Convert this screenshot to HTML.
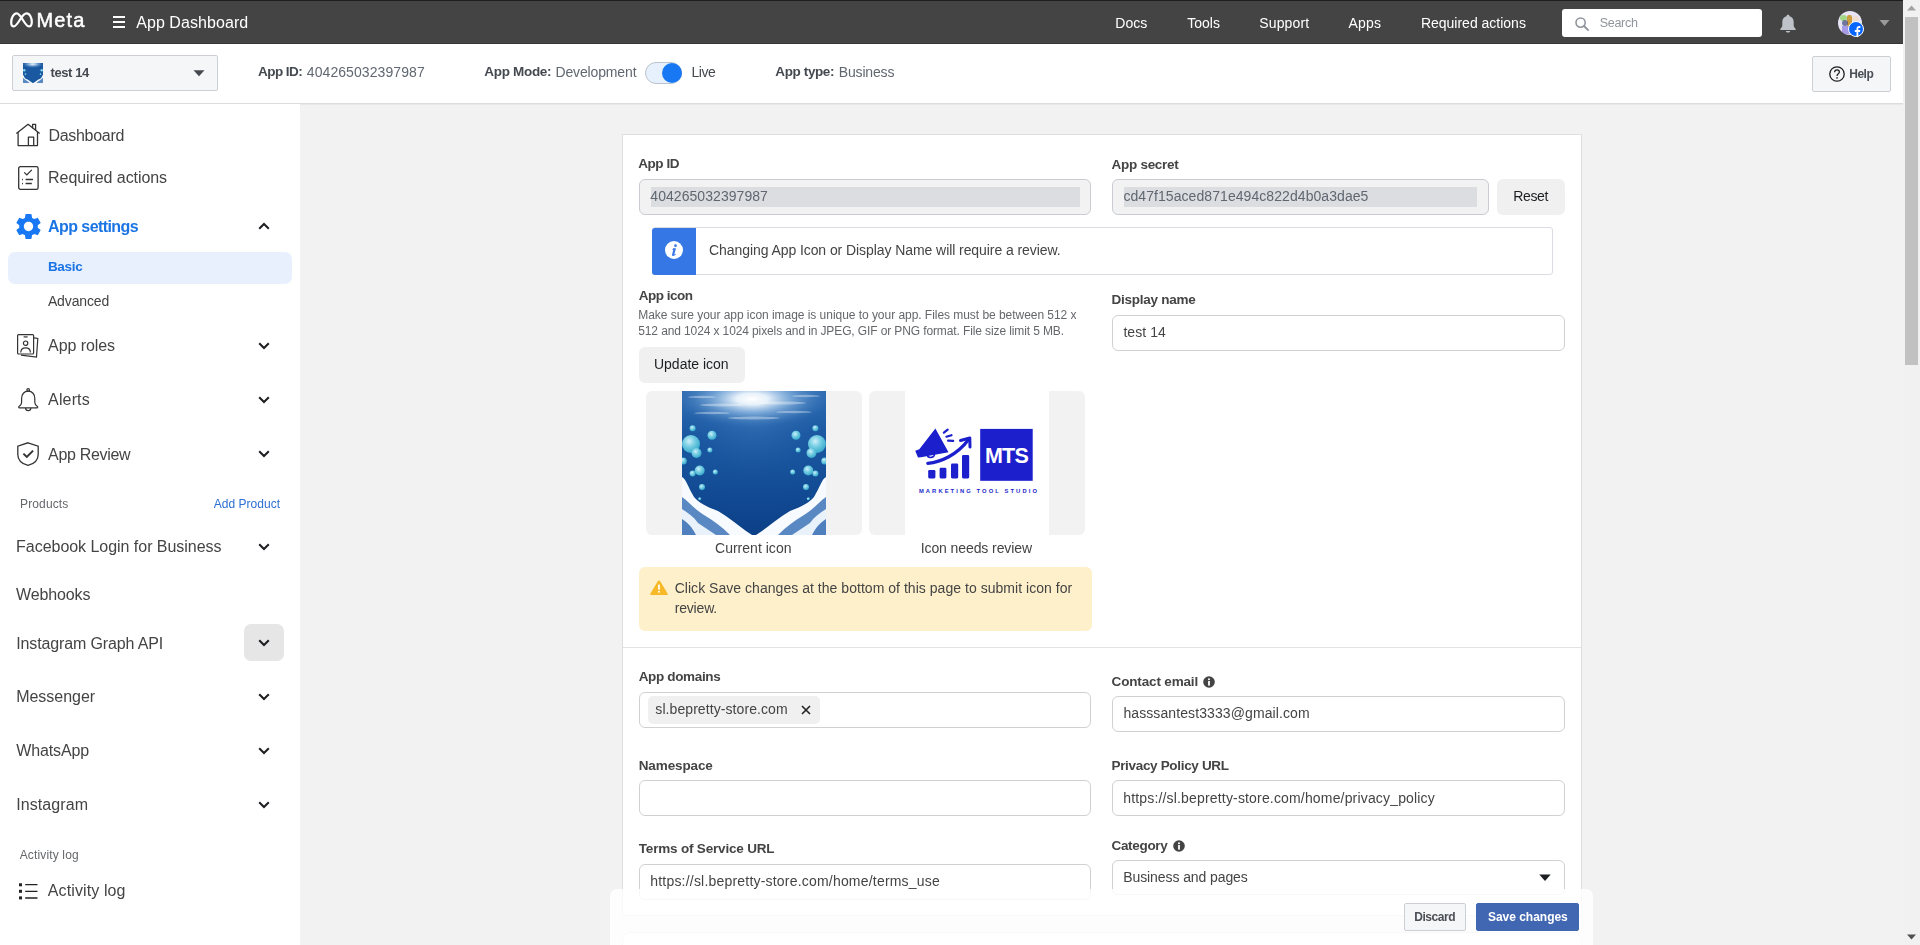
<!DOCTYPE html>
<html><head><meta charset="utf-8"><title>App Dashboard</title>
<style>
html,body{margin:0;padding:0;width:1920px;height:945px;overflow:hidden;background:#f2f2f2;font-family:"Liberation Sans",sans-serif;}
.a{position:absolute;box-sizing:border-box;}
.t{position:absolute;white-space:pre;font-family:"Liberation Sans",sans-serif;}
.L{position:absolute;left:0;top:0;width:1920px;height:945px;will-change:transform;}
svg{position:absolute;overflow:visible;}
.inp{position:absolute;box-sizing:border-box;background:#fff;border:1px solid #d0d1d4;border-radius:6px;}
</style></head><body>
<!-- topbar -->
<div class="a" style="left:0;top:0;width:1903px;height:44px;background:#444;border-top:1px solid #1e1e1e;border-bottom:1px solid #353535;"></div>
<!-- meta infinity -->
<svg style="left:10px;top:12px" width="23" height="16" viewBox="0 0 23 16"><path d="M6.8 1.3C3.6 1.3 1.2 6 1.2 10.2c0 2.5 1 4.2 2.6 4.2 2 0 3.4-2.1 6.6-7.4C13.4 2.2 14.6 1.3 16.6 1.3c3 0 5.2 4.4 5.2 8.6 0 2.7-1.1 4.5-2.9 4.5-2 0-3.3-1.9-6.3-6.9C9.6 2.5 8.6 1.3 6.8 1.3z" fill="none" stroke="#fff" stroke-width="2.2" stroke-linejoin="round"/></svg>
<!-- hamburger -->
<div class="a" style="left:113px;top:16px;width:12px;height:2px;background:#fff"></div>
<div class="a" style="left:113px;top:21px;width:12px;height:2px;background:#fff"></div>
<div class="a" style="left:113px;top:26px;width:12px;height:2px;background:#fff"></div>
<!-- search -->
<div class="a" style="left:1562px;top:9px;width:200px;height:28px;background:#fff;border-radius:3px"></div>
<svg style="left:1575px;top:17px" width="14" height="14" viewBox="0 0 14 14"><circle cx="5.6" cy="5.6" r="4.6" fill="none" stroke="#90949c" stroke-width="1.6"/><path d="M9 9l4 4" stroke="#90949c" stroke-width="1.8" stroke-linecap="round"/></svg>
<!-- bell -->
<svg style="left:1779px;top:14px" width="18" height="19" viewBox="0 0 18 19"><path d="M9 0.8c0.9 0 1.5 0.6 1.5 1.4 2.7 0.6 4.2 2.8 4.2 5.6v3.8c0 1.2 0.6 2 1.6 2.8 0.6 0.5 0.6 1.6-0.3 1.6H2c-0.9 0-0.9-1.1-0.3-1.6 1-0.8 1.6-1.6 1.6-2.8V7.8c0-2.8 1.5-5 4.2-5.6C7.5 1.4 8.1 0.8 9 0.8z M6.8 17h4.4c-0.3 1-1.1 1.6-2.2 1.6S7.1 18 6.8 17z" fill="#bec3c9"/></svg>
<!-- avatar -->
<div class="a" style="left:1838px;top:11px;width:24px;height:24px;border-radius:50%;background:#e9e4f5;overflow:hidden">
<div class="a" style="left:2px;top:4px;width:7px;height:6px;border-radius:50%;background:#8fd36a;opacity:.8"></div>
<div class="a" style="left:9px;top:4px;width:5px;height:12px;border-radius:2px;background:#c9962a;opacity:.9"></div>
<div class="a" style="left:4px;top:9px;width:6px;height:6px;border-radius:50%;background:#3c4a7a;opacity:.7"></div>
<div class="a" style="left:4px;top:15px;width:9px;height:8px;background:#8a7ae0;opacity:.7"></div>
<div class="a" style="left:14px;top:5px;width:7px;height:6px;border-radius:50%;background:#f2dccb;opacity:.9"></div>
</div>
<div class="a" style="left:1848px;top:21px;width:16px;height:16px;border-radius:50%;background:#0866ff;border:1.6px solid #fff;"></div>
<svg style="left:1853px;top:24.5px" width="8" height="12" viewBox="0 0 8 12"><path d="M5.3 12V7h1.7l.3-2H5.3V3.9c0-.6.2-1 1-1H7.4V1.1C7.2 1.1 6.6 1 6 1 4.6 1 3.5 1.9 3.5 3.6V5H1.8v2h1.7v5" fill="#fff"/></svg>
<svg style="left:1879px;top:20px" width="11" height="7" viewBox="0 0 11 7"><path d="M0.5 0h10L5.5 6z" fill="#9a9a9a"/></svg>

<!-- subheader -->
<div class="a" style="left:0;top:44px;width:1903px;height:60px;background:#fff;border-bottom:1px solid #dcdcdc;box-shadow:0 1px 1px rgba(0,0,0,.04)"></div>
<div class="a" style="left:12px;top:55px;width:206px;height:36px;background:#f5f6f7;border:1px solid #ccd0d5;border-radius:2px"></div>
<svg style="left:23px;top:63px;overflow:hidden" width="20" height="20" viewBox="0 0 144 144">
<defs><radialGradient id="sun2" gradientUnits="userSpaceOnUse" cx="70" cy="8" r="80" gradientTransform="translate(70 8) scale(1 .36) translate(-70 -8)"><stop offset="0" stop-color="#fff"/><stop offset=".5" stop-color="#a9cdee" stop-opacity=".55"/><stop offset="1" stop-color="#3573b8" stop-opacity="0"/></radialGradient></defs>
<rect width="144" height="144" fill="#1a58a2"/><rect width="144" height="60" fill="url(#sun2)"/>
<g fill="#7fd6e8"><circle cx="9" cy="53" r="9"/><circle cx="17.7" cy="79.5" r="6"/><circle cx="135" cy="53" r="9"/><circle cx="126.3" cy="79.5" r="6"/></g>
<path d="M0 86 C4 88 6 96 12 106 18 113 26 116 36 120 46 126 56 134 64 140 L70 144 H0z" fill="#f7fbff"/>
<path d="M144 86 C140 88 138 96 132 106 126 113 118 116 108 120 98 126 88 134 80 140 L74 144 H144z" fill="#f7fbff"/>
<path d="M0 106 C6 110 12 118 22 124 32 130 40 136 48 144 H0z" fill="#5a88c2"/>
<path d="M144 106 C138 110 132 118 122 124 112 130 104 136 96 144 H144z" fill="#5a88c2"/>
</svg>
<svg style="left:193px;top:70px" width="12" height="7" viewBox="0 0 12 7"><path d="M0.5 0.3h11L6 6.3z" fill="#444950"/></svg>
<!-- toggle -->
<div class="a" style="left:645px;top:62px;width:37px;height:22px;border-radius:11px;background:#e7f0fd;border:1px solid #bcc3cc"></div>
<div class="a" style="left:662px;top:63px;width:20px;height:20px;border-radius:50%;background:#1877f2"></div>
<!-- help -->
<div class="a" style="left:1812px;top:56px;width:79px;height:36px;background:#f5f6f7;border:1px solid #ccd0d5;border-radius:2px"></div>
<svg style="left:1829px;top:66px" width="16" height="16" viewBox="0 0 16 16"><circle cx="8" cy="8" r="7.2" fill="none" stroke="#1c1e21" stroke-width="1.3"/><path d="M5.6 6.2c0-1.4 1-2.3 2.4-2.3s2.4.9 2.4 2.2c0 1.5-1.8 1.7-2.3 3.2v.7" fill="none" stroke="#1c1e21" stroke-width="1.2"/><circle cx="8" cy="11.9" r=".8" fill="#1c1e21"/></svg>

<!-- sidebar -->
<div class="a" style="left:0;top:104px;width:300px;height:841px;background:#fff"></div>
<div class="a" style="left:8px;top:252px;width:284px;height:32px;background:#e7f0fc;border-radius:7px"></div>
<div class="a" style="left:244px;top:624px;width:40px;height:37px;background:#e6e6e6;border-radius:7px"></div>
<!-- sidebar icons -->
<svg style="left:16px;top:123px" width="24" height="24" viewBox="0 0 24 24" fill="none" stroke="#333" stroke-width="1.3" stroke-linejoin="round">
<path d="M0.3 10.4L12.1 1.3 23.7 10.4"/><path d="M2.1 9V22.6h19.4V9"/><path d="M16.6 5.2V1.3h3v6.3"/><path d="M12.4 22.6v-8.4h5.3v8.4"/></svg>
<svg style="left:18px;top:166px" width="21" height="24" viewBox="0 0 21 24" fill="none" stroke="#333" stroke-width="1.3">
<rect x="0.7" y="0.7" width="19.4" height="22.6" rx="1.6"/><path d="M6.2 6.4l2.6 2.5 5-5"/><path d="M7.6 13.5h7.4M7.6 17.5h6.2" /><path d="M4 13.5h.9M4 17.5h.9" stroke-width="1.5"/></svg>
<svg style="left:12.5px;top:210.5px" width="31" height="31" viewBox="0 0 24 24"><path fill="#1877f2" d="M19.14 12.94c.04-.3.06-.61.06-.94 0-.32-.02-.64-.07-.94l2.03-1.58c.18-.14.23-.41.12-.61l-1.92-3.32c-.12-.22-.37-.29-.59-.22l-2.39.96c-.5-.38-1.03-.7-1.62-.94l-.36-2.54c-.04-.24-.24-.41-.48-.41h-3.84c-.24 0-.43.17-.47.41l-.36 2.54c-.59.24-1.13.57-1.62.94l-2.39-.96c-.22-.08-.47 0-.59.22L2.74 8.87c-.12.21-.08.47.12.61l2.03 1.58c-.05.3-.09.63-.09.94s.02.64.07.94l-2.03 1.58c-.18.14-.23.41-.12.61l1.92 3.32c.12.22.37.29.59.22l2.39-.96c.5.38 1.03.7 1.62.94l.36 2.54c.05.24.24.41.48.41h3.84c.24 0 .44-.17.47-.41l.36-2.54c.59-.24 1.13-.56 1.62-.94l2.39.96c.22.08.47 0 .59-.22l1.92-3.32c.12-.22.07-.47-.12-.61l-2.01-1.58zM12 15.6c-1.98 0-3.6-1.62-3.6-3.6s1.62-3.6 3.6-3.6 3.6 1.62 3.6 3.6-1.62 3.6-3.6 3.6z"/></svg>
<svg style="left:17px;top:334px" width="23" height="24" viewBox="0 0 23 24" fill="none" stroke="#333" stroke-width="1.2">
<rect x="0.6" y="0.6" width="16" height="19.4" rx="1"/><path d="M17 3.8l3.8.7L19.5 23 4 21.2"/><path d="M6.6 2.9h4"/><circle cx="8.6" cy="9.2" r="2.2"/><path d="M3.8 18.4c0-3 2.2-4.6 4.8-4.6s4.8 1.6 4.8 4.6"/></svg>
<svg style="left:18px;top:388px" width="21" height="24" viewBox="0 0 21 24" fill="none" stroke="#333" stroke-width="1.2">
<path d="M10.2 3.1c-4.1 0-6.6 3.3-6.6 7.3v4.2c0 1.5-1 2.8-2.6 3.8-.6.4-.3 1.4.4 1.4h17.6c.7 0 1-1 .4-1.4-1.6-1-2.6-2.3-2.6-3.8v-4.2c0-4-2.5-7.3-6.6-7.3z"/><circle cx="10.2" cy="1.9" r="1.3"/><path d="M7.6 19.9c0 1.5 1.1 2.7 2.6 2.7s2.6-1.2 2.6-2.7"/></svg>
<svg style="left:17px;top:442px" width="23" height="24" viewBox="0 0 23 24" fill="none" stroke="#333" stroke-width="1.3">
<path d="M11 0.8L21.2 4.2v8.2c0 5.6-4.4 9.4-10.2 11-5.8-1.6-10.2-5.4-10.2-11V4.2z"/><path d="M6.4 11.6l3.4 3.3 6.3-6.3" stroke-width="2"/></svg>
<svg style="left:19px;top:883px" width="20" height="17" viewBox="0 0 20 17">
<rect x="0" y="0.3" width="3" height="3" fill="#222"/><rect x="0" y="6.8" width="3" height="3" fill="#222"/><rect x="0" y="13.4" width="3" height="3" fill="#222"/>
<path d="M6.2 1.6h12.3M6.2 8.3h12.3M6.2 15h12.3" stroke="#222" stroke-width="1.3"/></svg>
<!-- chevrons -->
<svg style="left:258px;top:222px" width="12" height="8" viewBox="0 0 12 8"><path d="M1.2 6.8L6 2 10.8 6.8" fill="none" stroke="#1c1e21" stroke-width="2"/></svg>
<svg style="left:258px;top:342px" width="12" height="8" viewBox="0 0 12 8"><path d="M1.2 1.2L6 6 10.8 1.2" fill="none" stroke="#1c1e21" stroke-width="2"/></svg>
<svg style="left:258px;top:396px" width="12" height="8" viewBox="0 0 12 8"><path d="M1.2 1.2L6 6 10.8 1.2" fill="none" stroke="#1c1e21" stroke-width="2"/></svg>
<svg style="left:258px;top:450px" width="12" height="8" viewBox="0 0 12 8"><path d="M1.2 1.2L6 6 10.8 1.2" fill="none" stroke="#1c1e21" stroke-width="2"/></svg>
<svg style="left:258px;top:543px" width="12" height="8" viewBox="0 0 12 8"><path d="M1.2 1.2L6 6 10.8 1.2" fill="none" stroke="#1c1e21" stroke-width="2"/></svg>
<svg style="left:258px;top:639px" width="12" height="8" viewBox="0 0 12 8"><path d="M1.2 1.2L6 6 10.8 1.2" fill="none" stroke="#1c1e21" stroke-width="2"/></svg>
<svg style="left:258px;top:693px" width="12" height="8" viewBox="0 0 12 8"><path d="M1.2 1.2L6 6 10.8 1.2" fill="none" stroke="#1c1e21" stroke-width="2"/></svg>
<svg style="left:258px;top:747px" width="12" height="8" viewBox="0 0 12 8"><path d="M1.2 1.2L6 6 10.8 1.2" fill="none" stroke="#1c1e21" stroke-width="2"/></svg>
<svg style="left:258px;top:801px" width="12" height="8" viewBox="0 0 12 8"><path d="M1.2 1.2L6 6 10.8 1.2" fill="none" stroke="#1c1e21" stroke-width="2"/></svg>

<!-- main card -->
<div class="a" style="left:622px;top:134px;width:960px;height:782px;background:#fff;border:1px solid #dedede"></div>
<div class="a" style="left:623px;top:647px;width:958px;height:1px;background:#e3e3e3"></div>
<div class="a" style="left:622px;top:932px;width:960px;height:40px;background:#fff;border:1px solid #dedede;border-radius:8px"></div>
<!-- app id input -->
<div class="inp" style="left:639px;top:179px;width:452px;height:36px;background:#f2f2f2;border-color:#c9ccd1"></div>
<div class="a" style="left:651px;top:187px;width:429px;height:20px;background:#dcdde1"></div>
<div class="inp" style="left:1112px;top:179px;width:377px;height:36px;background:#f2f2f2;border-color:#c9ccd1"></div>
<div class="a" style="left:1124px;top:187px;width:353px;height:20px;background:#dcdde1"></div>
<div class="a" style="left:1497px;top:179px;width:68px;height:36px;background:#f0f0f0;border-radius:6px"></div>
<!-- info banner -->
<div class="a" style="left:652px;top:227px;width:901px;height:48px;background:#fff;border:1px solid #dadde1;border-radius:3px"></div>
<div class="a" style="left:652px;top:227.5px;width:44px;height:47px;background:#3578e5;border-radius:3px 0 0 3px"></div>
<svg style="left:665px;top:241px" width="18" height="18" viewBox="0 0 18 18"><circle cx="9" cy="9" r="9" fill="#fff"/><path d="M8.1 7.3h2.9l-1.6 5.8c-.1.4.3.5.6.2l.6-.5.35.4c-.9 1.1-1.9 1.7-2.9 1.7-.9 0-1.2-.5-1-1.4l1.2-4.5-.9.1z" fill="#3578e5"/><circle cx="10.5" cy="4.7" r="1.35" fill="#3578e5"/></svg>
<!-- update icon -->
<div class="a" style="left:639px;top:347px;width:106px;height:36px;background:#f0f0f0;border-radius:6px"></div>
<!-- display name -->
<div class="inp" style="left:1112px;top:315px;width:453px;height:36px"></div>
<!-- tiles -->
<div class="a" style="left:646px;top:391px;width:216px;height:144px;background:#f2f2f2;border-radius:6px"></div>
<div class="a" style="left:869px;top:391px;width:216px;height:144px;background:#f2f2f2;border-radius:6px"></div>
<!-- ocean image -->
<svg style="left:682px;top:391px;overflow:hidden" width="144" height="144" viewBox="0 0 144 144">
<defs>
<linearGradient id="og" x1="0" y1="0" x2="0" y2="1"><stop offset="0" stop-color="#2f6db3"/><stop offset=".3" stop-color="#1a57a0"/><stop offset=".7" stop-color="#114a93"/><stop offset="1" stop-color="#0c4088"/></linearGradient>
<radialGradient id="sun" gradientUnits="userSpaceOnUse" cx="70" cy="8" r="80" gradientTransform="translate(70 8) scale(1 .36) translate(-70 -8)"><stop offset="0" stop-color="#fff"/><stop offset=".2" stop-color="#f0f7fd" stop-opacity=".95"/><stop offset=".5" stop-color="#a9cdee" stop-opacity=".55"/><stop offset="1" stop-color="#3573b8" stop-opacity="0"/></radialGradient>
<radialGradient id="rays" gradientUnits="userSpaceOnUse" cx="72" cy="20" r="110"><stop offset="0" stop-color="#6aa6e0" stop-opacity=".3"/><stop offset=".6" stop-color="#2a6ab5" stop-opacity=".08"/><stop offset="1" stop-color="#2a6ab5" stop-opacity="0"/></radialGradient>
<radialGradient id="bub" cx=".4" cy=".35" r=".65"><stop offset="0" stop-color="#d8f8ff"/><stop offset=".45" stop-color="#7fd6e8"/><stop offset="1" stop-color="#3bb0cf"/></radialGradient>
</defs>
<rect width="144" height="144" fill="url(#og)"/>
<rect width="144" height="144" fill="url(#rays)"/>
<rect width="144" height="60" fill="url(#sun)"/><g fill="#fff" opacity=".35"><ellipse cx="40" cy="14" rx="22" ry="1.5"/><ellipse cx="100" cy="12" rx="24" ry="1.5"/><ellipse cx="30" cy="22" rx="18" ry="1.2"/><ellipse cx="112" cy="21" rx="18" ry="1.2"/><ellipse cx="72" cy="27" rx="26" ry="1.4"/><ellipse cx="20" cy="6" rx="14" ry="1.2"/><ellipse cx="124" cy="5" rx="14" ry="1.2"/></g>
<g fill="url(#bub)" opacity=".95">
<circle cx="9" cy="53" r="9"/><circle cx="14.5" cy="62" r="5"/><circle cx="10.6" cy="37.2" r="3"/><circle cx="30" cy="44.3" r="4.5"/><circle cx="27.9" cy="59" r="2.5"/><circle cx="17.7" cy="79.5" r="5"/><circle cx="10.6" cy="82.6" r="3"/><circle cx="33.3" cy="81" r="2.5"/><circle cx="20" cy="96" r="3"/><circle cx="1.3" cy="70" r="3.5"/><circle cx="1.3" cy="96" r="3"/><circle cx="17.7" cy="107.7" r="1.5"/>
<circle cx="135" cy="53" r="9"/><circle cx="129.5" cy="62" r="5"/><circle cx="133.4" cy="37.2" r="3"/><circle cx="114" cy="44.3" r="4.5"/><circle cx="116.1" cy="59" r="2.5"/><circle cx="126.3" cy="79.5" r="5"/><circle cx="133.4" cy="82.6" r="3"/><circle cx="110.7" cy="81" r="2.5"/><circle cx="124" cy="96" r="3"/><circle cx="142.7" cy="70" r="3.5"/><circle cx="142.7" cy="96" r="3"/><circle cx="126.3" cy="107.7" r="1.5"/>
</g>
<path d="M0 86 C4 88 6 96 12 106 18 113 26 116 36 120 46 126 56 134 64 140 L70 144 H0z" fill="#f7fbff"/>
<path d="M144 86 C140 88 138 96 132 106 126 113 118 116 108 120 98 126 88 134 80 140 L74 144 H144z" fill="#f7fbff"/>
<path d="M0 106 C6 110 12 118 22 124 32 130 40 136 48 144 H0z" fill="#5a88c2"/>
<path d="M144 106 C138 110 132 118 122 124 112 130 104 136 96 144 H144z" fill="#5a88c2"/>
<path d="M0 118 C6 122 12 126 16 132 22 136 28 140 34 144 H0z" fill="#e9f1fa"/>
<path d="M144 118 C138 122 132 126 128 132 122 136 116 140 110 144 H144z" fill="#e9f1fa"/>
<path d="M0 128 C6 132 10 136 14 144 H0z" fill="#4f7fbc"/>
<path d="M144 128 C138 132 134 136 130 144 H144z" fill="#4f7fbc"/>
</svg>
<!-- MTS logo -->
<div class="a" style="left:905px;top:391px;width:144px;height:144px;background:#fff"></div>
<svg style="left:905px;top:391px" width="144" height="144" viewBox="0 0 144 144">
<g fill="#1b1fcc">
<rect x="75.2" y="37.9" width="52.5" height="51.9"/>
<path d="M30.4 37.5 L43.5 61.2 L16 66.2 L13 66.5 L10.2 59.8 L14.3 58.2z"/>
<path d="M22 63.5 a3.8 3.8 0 0 0 7.5 -1" fill="none" stroke="#1b1fcc" stroke-width="1.6"/>
<rect x="23.2" y="79" width="7.2" height="8.4" rx="1.3"/><rect x="34.6" y="76.8" width="6.8" height="10.6" rx="1.3"/><rect x="46" y="72.6" width="7.2" height="14.8" rx="1.3"/><rect x="57" y="64.1" width="7.2" height="23.3" rx="1.3"/>
</g>
<g fill="none" stroke="#1b1fcc" stroke-linecap="round">
<path d="M38.9 41.7 L42.7 38.7" stroke-width="2.2"/><path d="M41.4 45.7 L46.5 44.2" stroke-width="2.2"/><path d="M43.1 49.7 L48.2 49.9" stroke-width="2.2"/>
<path d="M22.8 72.4 C36 71 52 64 63.6 48.5" stroke-width="3.2"/>
<path d="M55.5 49.5 L64.8 47 L65 56" stroke-width="3" stroke-linejoin="round"/>
</g>
<text x="101.5" y="71.7" text-anchor="middle" font-family="Liberation Sans" font-weight="700" font-size="21.5" fill="#fff" letter-spacing="-0.8">MTS</text>
<text x="13.9" y="102.3" font-family="Liberation Sans" font-weight="700" font-size="5.8" fill="#1b1fcc" textLength="118" lengthAdjust="spacing">MARKETING TOOL STUDIO</text>
</svg>
<!-- warning -->
<div class="a" style="left:639px;top:567px;width:453px;height:64px;background:#fdf0cb;border-radius:6px"></div>
<svg style="left:650px;top:580px" width="18" height="15" viewBox="0 0 18 15"><path d="M9 0.5c.5 0 .9.3 1.2.8l7.4 12.1c.5.8-.1 1.6-1 1.6H1.4c-.9 0-1.5-.8-1-1.6L7.8 1.3C8.1.8 8.5.5 9 .5z" fill="#f7b928"/><rect x="8.1" y="4.4" width="1.8" height="5.4" rx=".6" fill="#fff"/><circle cx="9" cy="11.8" r="1" fill="#fff"/></svg>
<!-- lower form -->
<div class="inp" style="left:639px;top:692px;width:452px;height:36px"></div>
<div class="a" style="left:648px;top:696px;width:172px;height:28px;background:#f0f0f0;border-radius:5px"></div>
<svg style="left:801px;top:705px" width="10" height="10" viewBox="0 0 10 10"><path d="M1 1l8 8M9 1L1 9" stroke="#222" stroke-width="1.6"/></svg>
<div class="inp" style="left:1112px;top:696px;width:453px;height:36px"></div>
<svg style="left:1203px;top:676px" width="12" height="12" viewBox="0 0 12 12"><circle cx="6" cy="6" r="5.8" fill="#444"/><rect x="5.1" y="5" width="1.8" height="4.6" fill="#fff"/><circle cx="6" cy="3.3" r="1" fill="#fff"/></svg>
<div class="inp" style="left:639px;top:780px;width:452px;height:36px"></div>
<div class="inp" style="left:1112px;top:780px;width:453px;height:36px"></div>
<div class="inp" style="left:639px;top:864px;width:452px;height:36px"></div>
<div class="inp" style="left:1112px;top:860px;width:453px;height:35px"></div>
<svg style="left:1173px;top:840px" width="12" height="12" viewBox="0 0 12 12"><circle cx="6" cy="6" r="5.8" fill="#444"/><rect x="5.1" y="5" width="1.8" height="4.6" fill="#fff"/><circle cx="6" cy="3.3" r="1" fill="#fff"/></svg>
<svg style="left:1539px;top:874px" width="12" height="8" viewBox="0 0 12 8"><path d="M0.3 0.5h11.4L6 7z" fill="#1c1e21"/></svg>
<div class="L"><div class="t" style="left:36.50px;top:10.07px;font-size:20px;line-height:20px;color:#fff;font-weight:400;letter-spacing:1.110px;-webkit-text-stroke:0.5px #fff;">Meta</div>
<div class="t" style="left:136.20px;top:14.56px;font-size:16px;line-height:16px;color:#fff;font-weight:400;letter-spacing:0.068px;">App Dashboard</div>
<div class="t" style="left:1115.30px;top:15.85px;font-size:14px;line-height:14px;color:#fff;font-weight:400;letter-spacing:0.031px;">Docs</div>
<div class="t" style="left:1187.20px;top:15.85px;font-size:14px;line-height:14px;color:#fff;font-weight:400;letter-spacing:0.028px;">Tools</div>
<div class="t" style="left:1259.30px;top:15.85px;font-size:14px;line-height:14px;color:#fff;font-weight:400;letter-spacing:0.126px;">Support</div>
<div class="t" style="left:1348.40px;top:15.85px;font-size:14px;line-height:14px;color:#fff;font-weight:400;letter-spacing:0.193px;">Apps</div>
<div class="t" style="left:1420.90px;top:15.85px;font-size:14px;line-height:14px;color:#fff;font-weight:400;letter-spacing:-0.004px;">Required actions</div>
<div class="t" style="left:1599.70px;top:17.42px;font-size:12.5px;line-height:12.5px;color:#90949c;font-weight:400;letter-spacing:-0.282px;">Search</div>
<div class="t" style="left:50.50px;top:65.80px;font-size:13px;line-height:13px;color:#444950;font-weight:700;letter-spacing:-0.401px;">test 14</div>
<div class="t" style="left:258.00px;top:65.27px;font-size:13.5px;line-height:13.5px;color:#444950;font-weight:700;letter-spacing:-0.531px;">App ID:</div>
<div class="t" style="left:306.80px;top:64.85px;font-size:14px;line-height:14px;color:#606770;font-weight:400;letter-spacing:0.079px;">404265032397987</div>
<div class="t" style="left:484.25px;top:65.47px;font-size:13.5px;line-height:13.5px;color:#444950;font-weight:700;letter-spacing:-0.306px;">App Mode:</div>
<div class="t" style="left:555.50px;top:65.05px;font-size:14px;line-height:14px;color:#606770;font-weight:400;letter-spacing:-0.145px;">Development</div>
<div class="t" style="left:691.40px;top:65.05px;font-size:14px;line-height:14px;color:#444950;font-weight:400;letter-spacing:-0.396px;">Live</div>
<div class="t" style="left:775.30px;top:65.37px;font-size:13.5px;line-height:13.5px;color:#444950;font-weight:700;letter-spacing:-0.382px;">App type:</div>
<div class="t" style="left:838.70px;top:64.95px;font-size:14px;line-height:14px;color:#606770;font-weight:400;letter-spacing:-0.145px;">Business</div>
<div class="t" style="left:1849.25px;top:67.74px;font-size:12px;line-height:12px;color:#4b4f56;font-weight:700;letter-spacing:-0.489px;">Help</div>
<div class="t" style="left:48.50px;top:128.06px;font-size:16px;line-height:16px;color:#444;font-weight:400;letter-spacing:-0.310px;">Dashboard</div>
<div class="t" style="left:48.10px;top:170.46px;font-size:16px;line-height:16px;color:#444;font-weight:400;letter-spacing:-0.072px;">Required actions</div>
<div class="t" style="left:48.10px;top:218.66px;font-size:16px;line-height:16px;color:#1b74e4;font-weight:700;letter-spacing:-0.581px;">App settings</div>
<div class="t" style="left:47.90px;top:260.47px;font-size:13.5px;line-height:13.5px;color:#1b74e4;font-weight:700;letter-spacing:-0.281px;">Basic</div>
<div class="t" style="left:47.90px;top:293.75px;font-size:14px;line-height:14px;color:#444;font-weight:400;letter-spacing:-0.126px;">Advanced</div>
<div class="t" style="left:48.10px;top:338.16px;font-size:16px;line-height:16px;color:#444;font-weight:400;letter-spacing:-0.074px;">App roles</div>
<div class="t" style="left:48.10px;top:392.26px;font-size:16px;line-height:16px;color:#444;font-weight:400;letter-spacing:0.139px;">Alerts</div>
<div class="t" style="left:48.10px;top:446.56px;font-size:16px;line-height:16px;color:#444;font-weight:400;letter-spacing:-0.319px;">App Review</div>
<div class="t" style="left:20.00px;top:497.64px;font-size:12px;line-height:12px;color:#65676b;font-weight:400;letter-spacing:0.134px;">Products</div>
<div class="t" style="left:213.70px;top:497.64px;font-size:12px;line-height:12px;color:#2d6fd2;font-weight:400;letter-spacing:0.035px;">Add Product</div>
<div class="t" style="left:16.10px;top:539.46px;font-size:16px;line-height:16px;color:#444;font-weight:400;letter-spacing:-0.036px;">Facebook Login for Business</div>
<div class="t" style="left:16.10px;top:587.16px;font-size:16px;line-height:16px;color:#444;font-weight:400;letter-spacing:-0.130px;">Webhooks</div>
<div class="t" style="left:16.20px;top:635.76px;font-size:16px;line-height:16px;color:#444;font-weight:400;letter-spacing:-0.134px;">Instagram Graph API</div>
<div class="t" style="left:16.20px;top:689.16px;font-size:16px;line-height:16px;color:#444;font-weight:400;letter-spacing:-0.020px;">Messenger</div>
<div class="t" style="left:16.20px;top:743.16px;font-size:16px;line-height:16px;color:#444;font-weight:400;letter-spacing:-0.116px;">WhatsApp</div>
<div class="t" style="left:16.20px;top:797.36px;font-size:16px;line-height:16px;color:#444;font-weight:400;letter-spacing:0.095px;">Instagram</div>
<div class="t" style="left:19.70px;top:848.59px;font-size:12px;line-height:12px;color:#65676b;font-weight:400;letter-spacing:0.149px;">Activity log</div>
<div class="t" style="left:47.80px;top:883.36px;font-size:16px;line-height:16px;color:#444;font-weight:400;letter-spacing:0.112px;">Activity log</div>
<div class="t" style="left:638.20px;top:157.37px;font-size:13.5px;line-height:13.5px;color:#444;font-weight:700;letter-spacing:-0.420px;">App ID</div>
<div class="t" style="left:650.30px;top:188.85px;font-size:14px;line-height:14px;color:#606770;font-weight:400;letter-spacing:0.057px;">404265032397987</div>
<div class="t" style="left:1111.50px;top:157.87px;font-size:13.5px;line-height:13.5px;color:#444;font-weight:700;letter-spacing:-0.275px;">App secret</div>
<div class="t" style="left:1123.40px;top:189.15px;font-size:14px;line-height:14px;color:#606770;font-weight:400;letter-spacing:0.068px;">cd47f15aced871e494c822d4b0a3dae5</div>
<div class="t" style="left:1513.30px;top:189.15px;font-size:14px;line-height:14px;color:#1c1e21;font-weight:400;letter-spacing:-0.370px;">Reset</div>
<div class="t" style="left:709.00px;top:243.15px;font-size:14px;line-height:14px;color:#444;font-weight:400;letter-spacing:-0.073px;">Changing App Icon or Display Name will require a review.</div>
<div class="t" style="left:638.70px;top:289.37px;font-size:13.5px;line-height:13.5px;color:#444;font-weight:700;letter-spacing:-0.479px;">App icon</div>
<div class="t" style="left:638.25px;top:308.74px;font-size:12px;line-height:12px;color:#65676b;font-weight:400;letter-spacing:-0.042px;">Make sure your app icon image is unique to your app. Files must be between 512 x</div>
<div class="t" style="left:638.25px;top:324.84px;font-size:12px;line-height:12px;color:#65676b;font-weight:400;letter-spacing:-0.115px;">512 and 1024 x 1024 pixels and in JPEG, GIF or PNG format. File size limit 5 MB.</div>
<div class="t" style="left:654.00px;top:357.40px;font-size:14px;line-height:14px;color:#1c1e21;font-weight:400;letter-spacing:-0.017px;">Update icon</div>
<div class="t" style="left:1111.40px;top:293.37px;font-size:13.5px;line-height:13.5px;color:#444;font-weight:700;letter-spacing:-0.240px;">Display name</div>
<div class="t" style="left:1123.40px;top:324.95px;font-size:14px;line-height:14px;color:#444;font-weight:400;letter-spacing:0.061px;">test 14</div>
<div class="t" style="left:715.00px;top:541.15px;font-size:14px;line-height:14px;color:#444;font-weight:400;letter-spacing:0.021px;">Current icon</div>
<div class="t" style="left:920.70px;top:541.15px;font-size:14px;line-height:14px;color:#444;font-weight:400;letter-spacing:-0.090px;">Icon needs review</div>
<div class="t" style="left:674.70px;top:581.45px;font-size:14px;line-height:14px;color:#444;font-weight:400;letter-spacing:0.034px;">Click Save changes at the bottom of this page to submit icon for</div>
<div class="t" style="left:674.70px;top:601.35px;font-size:14px;line-height:14px;color:#444;font-weight:400;letter-spacing:-0.180px;">review.</div>
<div class="t" style="left:638.70px;top:670.47px;font-size:13.5px;line-height:13.5px;color:#444;font-weight:700;letter-spacing:-0.351px;">App domains</div>
<div class="t" style="left:655.30px;top:702.15px;font-size:14px;line-height:14px;color:#444;font-weight:400;letter-spacing:0.079px;">sl.bepretty-store.com</div>
<div class="t" style="left:1111.60px;top:674.57px;font-size:13.5px;line-height:13.5px;color:#444;font-weight:700;letter-spacing:-0.161px;">Contact email</div>
<div class="t" style="left:1123.40px;top:705.95px;font-size:14px;line-height:14px;color:#444;font-weight:400;letter-spacing:0.098px;">hasssantest3333@gmail.com</div>
<div class="t" style="left:638.75px;top:758.57px;font-size:13.5px;line-height:13.5px;color:#444;font-weight:700;letter-spacing:-0.125px;">Namespace</div>
<div class="t" style="left:1111.50px;top:758.57px;font-size:13.5px;line-height:13.5px;color:#444;font-weight:700;letter-spacing:-0.325px;">Privacy Policy URL</div>
<div class="t" style="left:1123.25px;top:790.65px;font-size:14px;line-height:14px;color:#444;font-weight:400;letter-spacing:0.168px;">https://sl.bepretty-store.com/home/privacy_policy</div>
<div class="t" style="left:638.75px;top:842.32px;font-size:13.5px;line-height:13.5px;color:#444;font-weight:700;letter-spacing:-0.185px;">Terms of Service URL</div>
<div class="t" style="left:650.25px;top:874.40px;font-size:14px;line-height:14px;color:#444;font-weight:400;letter-spacing:0.201px;">https://sl.bepretty-store.com/home/terms_use</div>
<div class="t" style="left:1111.50px;top:839.07px;font-size:13.5px;line-height:13.5px;color:#444;font-weight:700;letter-spacing:-0.317px;">Category</div>
<div class="t" style="left:1123.25px;top:870.15px;font-size:14px;line-height:14px;color:#444;font-weight:400;letter-spacing:-0.091px;">Business and pages</div></div>
<!-- footer overlay -->
<div class="a" style="left:610px;top:889px;width:983px;height:56px;background:rgba(255,255,255,.82);border-radius:7px 7px 0 0"></div>
<div class="a" style="left:1404px;top:903px;width:62px;height:28px;background:#f5f6f7;border:1px solid #ccd0d5;border-radius:2px"></div>
<div class="a" style="left:1476px;top:903px;width:103px;height:28px;background:#4267b2;border:1px solid #4267b2;border-radius:2px"></div>
<div class="L"><div class="t" style="left:1414.20px;top:910.84px;font-size:12px;line-height:12px;color:#4b4f56;font-weight:700;letter-spacing:-0.455px;">Discard</div>
<div class="t" style="left:1487.90px;top:910.84px;font-size:12px;line-height:12px;color:#fff;font-weight:700;letter-spacing:-0.013px;">Save changes</div></div>
<!-- scrollbar -->
<div class="a" style="left:1903px;top:0;width:17px;height:945px;background:#f1f1f1"></div>
<div class="a" style="left:1905px;top:17px;width:13px;height:348px;background:#c1c1c1"></div>
<svg style="left:1907px;top:5px" width="9" height="6" viewBox="0 0 9 6"><path d="M0 5.5L4.5 0.5 9 5.5z" fill="#a3a3a3"/></svg>
<svg style="left:1907px;top:934px" width="9" height="6" viewBox="0 0 9 6"><path d="M0 0.5L4.5 5.5 9 0.5z" fill="#505050"/></svg>
</body></html>
